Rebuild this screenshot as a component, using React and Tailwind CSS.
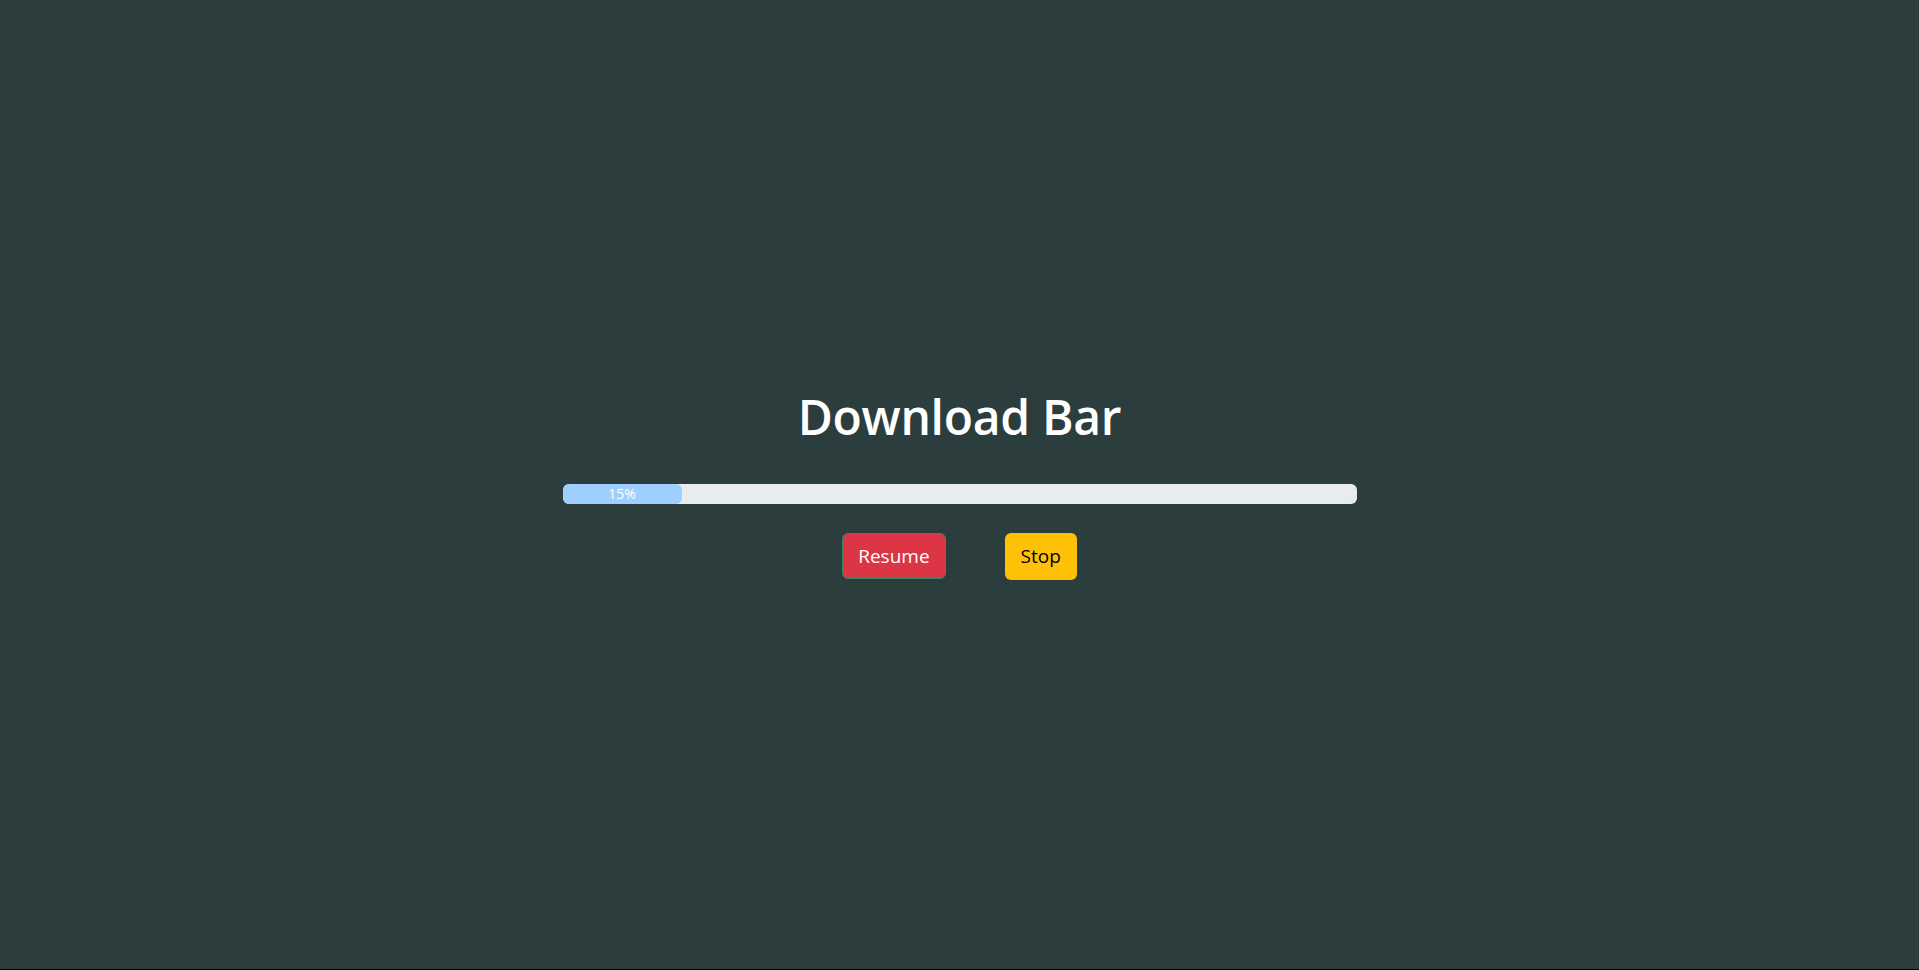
export default function App() {
  const progress = 15

  return (
    <div className="flex flex-col items-center justify-center h-[970px] pt-[3px] bg-[#2c3d3e] border-b border-black font-['Open_Sans',sans-serif]">
      <h1 className="text-[48px] font-semibold text-white leading-none tracking-[-0.3px] mb-[43px]">Download Bar</h1>

      <div className="w-[794px] h-5 bg-[#e9ecef] rounded-[6px] overflow-hidden flex">
        <div
          className="h-full bg-[#9ecfff] rounded-[6px] flex items-center justify-center text-[14px] text-white"
          style={{ width: `${progress}%` }}
        >
          {progress}%
        </div>
      </div>

      <div className="flex items-center gap-[59px] mt-[29px]">
        <button className="h-[46px] px-[15px] bg-[#dc3545] border border-[#2f8a5e] rounded-[6px] text-white text-[19px]">
          Resume
        </button>
        <button className="h-[47px] px-[16px] bg-[#ffc107] rounded-[6px] text-black text-[19px]">
          Stop
        </button>
      </div>
    </div>
  )
}
